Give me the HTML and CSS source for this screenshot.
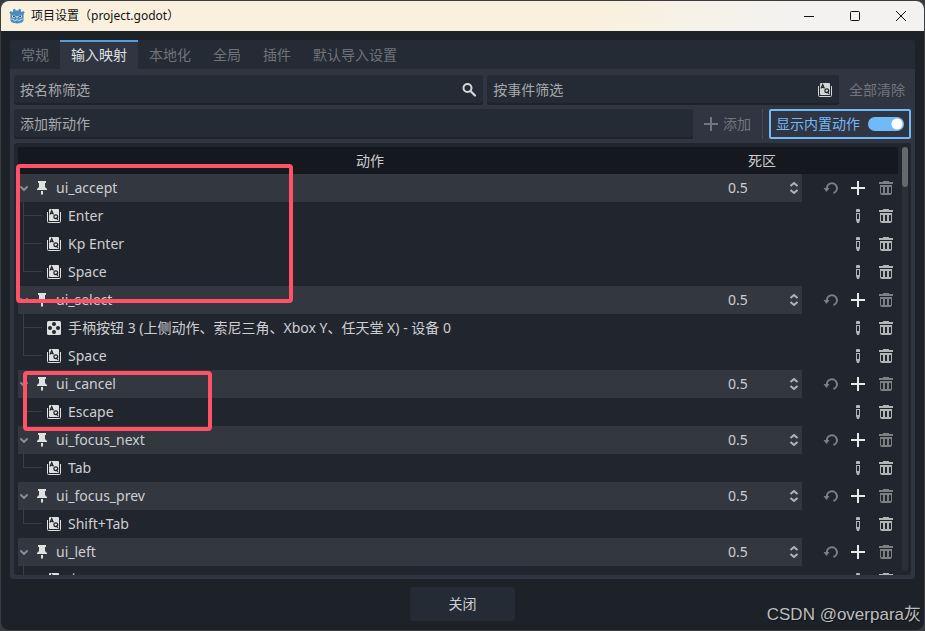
FILE: index.html
```html
<!DOCTYPE html>
<html lang="zh-CN">
<head>
    <meta charset="UTF-8">
    <meta name="viewport" content="width=device-width, initial-scale=1.0">
    <title>项目设置（project.godot）</title>
    <link rel="stylesheet" href="styles.css">
</head>
<body>
    <!-- Icon sprite -->
    <svg class="sprite" aria-hidden="true">
        <symbol id="i-arrow" viewBox="0 0 12 12"><path d="M3 5l3 3 3-3" fill="none" stroke="currentColor" stroke-width="2" stroke-linecap="round" stroke-linejoin="round"/></symbol>
        <symbol id="i-pin" viewBox="0 0 16 16"><path d="M4 1h8v2h-1v4l2 2v1H3V9l2-2V3H4z" fill="currentColor"/><path d="M7 11h2v3l-1 1-1-1z" fill="currentColor"/></symbol>
        <symbol id="i-key" viewBox="0 0 16 16">
            <path d="M1.500 4v9.500a1 1 0 0 0 1 1h11a1 1 0 0 0 1-1V4" fill="none" stroke="currentColor"/>
            <rect x="3" y="1" width="10" height="12" rx="1" fill="currentColor"/>
            <path d="M4 6.500l1.700-4 1.700 4M4.700 5.300h2" fill="none" stroke="#21252e" stroke-width="1.200"/>
            <circle cx="9.800" cy="8.700" r="1.900" fill="none" stroke="#21252e" stroke-width="1.200"/>
            <path d="M10 9.500l2 2.500" stroke="#21252e" stroke-width="1.200"/>
        </symbol>
        <symbol id="i-joy" viewBox="0 0 16 16">
            <rect x="1" y="1" width="14" height="14" rx="1.500" fill="currentColor"/>
            <g fill="#21252e"><circle cx="8" cy="4" r="2"/><circle cx="4" cy="8" r="2"/><circle cx="12" cy="8" r="2"/><circle cx="8" cy="12" r="2"/></g>
        </symbol>
        <symbol id="i-spin" viewBox="0 0 16 16"><path d="M4.500 6L8 3l3.500 3M4.500 10L8 13l3.500-3" fill="none" stroke="currentColor" stroke-width="2"/></symbol>
        <symbol id="i-reset" viewBox="0 0 16 16"><path d="M5 9a5 5 0 1 1 6.500 4" fill="none" stroke="currentColor" stroke-width="2"/><path d="M1.500 8h6l-3 4z" fill="currentColor"/></symbol>
        <symbol id="i-plus" viewBox="0 0 16 16"><path d="M7 1h2v6h6v2H9v6H7V9H1V7h6z" fill="currentColor"/></symbol>
        <symbol id="i-edit" viewBox="0 0 16 16"><path d="M6 4V2a1 1 0 0 1 1-1h2a1 1 0 0 1 1 1v2z" fill="currentColor"/><path fill-rule="evenodd" d="M6 5h4v7l-1 3H7l-1-3zm1 1v5h2V6z" fill="currentColor"/></symbol>
        <symbol id="i-trash" viewBox="0 0 16 16"><path fill-rule="evenodd" d="M5 1v1H1v2h14V2h-4V1zM2 5v8a2 2 0 0 0 2 2h8a2 2 0 0 0 2-2V5zm1 2h2v6H3zm4 0h2v6H7zm4 0h2v6h-2z" fill="currentColor"/></symbol>
        <symbol id="i-search" viewBox="0 0 16 16"><circle cx="6.500" cy="6" r="4" fill="none" stroke="currentColor" stroke-width="2"/><path d="M9.500 9l4.500 4.500" stroke="currentColor" stroke-width="2.200" stroke-linecap="round"/></symbol>
    </svg>

    <div class="window">
        <header class="titlebar">
            <svg class="logo" viewBox="0 0 16 16">
                <path d="M6 .8l.6 1.700h2.800L10 .8l2 .8-.1 1.800.8.6 1.700-.9 1.300 1.700-1.100 1.300V12c0 2-3 3.400-6.600 3.400S1.400 14 1.400 12V6.100L.3 4.800l1.300-1.700 1.700.9.8-.6L4 1.600z" fill="#478cbf"/>
                <circle cx="4.700" cy="8.200" r="1.500" fill="#fff"/><circle cx="11.300" cy="8.200" r="1.500" fill="#fff"/>
                <circle cx="4.900" cy="8.300" r="1" fill="#414042"/><circle cx="11.100" cy="8.300" r="1" fill="#414042"/>
                <path d="M8 8v2.200" stroke="#fff"/>
                <path d="M1.600 11l3 .3.300 1.400h2l.3-1.100h1.600l.3 1.100h2l.3-1.400 3-.3" fill="none" stroke="#fff" stroke-width=".6"/>
            </svg>
            <span class="title">项目设置（project.godot）</span>
            <div class="window-buttons">
                <button type="button" aria-label="最小化"><svg viewBox="0 0 12 12"><path d="M1 6.500h10" stroke="#111"/></svg></button>
                <button type="button" aria-label="最大化"><svg viewBox="0 0 12 12"><rect x="1.500" y="1.500" width="9" height="9" rx="1" fill="none" stroke="#111"/></svg></button>
                <button type="button" aria-label="关闭窗口"><svg viewBox="0 0 12 12"><path d="M1 1l10 10M11 1L1 11" stroke="#111"/></svg></button>
            </div>
        </header>

        <main class="content">
            <nav class="tabs">
                <button type="button" class="tab">常规</button>
                <button type="button" class="tab active">输入映射</button>
                <button type="button" class="tab">本地化</button>
                <button type="button" class="tab">全局</button>
                <button type="button" class="tab">插件</button>
                <button type="button" class="tab">默认导入设置</button>
            </nav>

            <section class="panel">
                <div class="toolbar">
                    <div class="field field-name">
                        <input type="text" placeholder="按名称筛选" aria-label="按名称筛选">
                        <svg class="icon"><use href="#i-search"/></svg>
                    </div>
                    <div class="field field-event">
                        <input type="text" placeholder="按事件筛选" aria-label="按事件筛选">
                        <svg class="icon"><use href="#i-key"/></svg>
                    </div>
                    <button type="button" class="flat" disabled>全部清除</button>
                </div>
                <div class="toolbar">
                    <div class="field">
                        <input type="text" placeholder="添加新动作" aria-label="添加新动作">
                    </div>
                    <button type="button" class="flat" disabled><svg class="icon"><use href="#i-plus"/></svg>添加</button>
                    <span class="separator"></span>
                    <label class="toggle">显示内置动作<input type="checkbox" checked></label>
                </div>

                <div class="tree">
                    <div class="table-wrap">
                    <table class="actions">
                        <colgroup><col><col class="col-zone"><col class="col-tools"></colgroup>
                        <thead>
                            <tr><th>动作</th><th>死区</th><th></th></tr>
                        </thead>
                        <tbody>
                            <tr class="action">
                                <td><div class="name"><svg class="arrow"><use href="#i-arrow"/></svg><svg class="icon"><use href="#i-pin"/></svg>ui_accept</div></td>
                                <td><div class="zone"><input type="text" value="0.5" aria-label="ui_accept 死区"><svg class="icon"><use href="#i-spin"/></svg></div></td>
                                <td><div class="tools"><button type="button" class="dim" aria-label="还原"><svg class="icon"><use href="#i-reset"/></svg></button><button type="button" class="bright" aria-label="添加事件"><svg class="icon"><use href="#i-plus"/></svg></button><button type="button" class="dim" aria-label="移除"><svg class="icon"><use href="#i-trash"/></svg></button></div></td>
                            </tr>
                            <tr>
                                <td colspan="2"><div class="event"><span class="branch"></span><svg class="icon"><use href="#i-key"/></svg>Enter</div></td>
                                <td><div class="tools"><button type="button" aria-label="编辑"><svg class="icon"><use href="#i-edit"/></svg></button><button type="button" aria-label="移除"><svg class="icon"><use href="#i-trash"/></svg></button></div></td>
                            </tr>
                            <tr>
                                <td colspan="2"><div class="event"><span class="branch"></span><svg class="icon"><use href="#i-key"/></svg>Kp Enter</div></td>
                                <td><div class="tools"><button type="button" aria-label="编辑"><svg class="icon"><use href="#i-edit"/></svg></button><button type="button" aria-label="移除"><svg class="icon"><use href="#i-trash"/></svg></button></div></td>
                            </tr>
                            <tr>
                                <td colspan="2"><div class="event"><span class="branch last"></span><svg class="icon"><use href="#i-key"/></svg>Space</div></td>
                                <td><div class="tools"><button type="button" aria-label="编辑"><svg class="icon"><use href="#i-edit"/></svg></button><button type="button" aria-label="移除"><svg class="icon"><use href="#i-trash"/></svg></button></div></td>
                            </tr>

                            <tr class="action">
                                <td><div class="name"><svg class="arrow"><use href="#i-arrow"/></svg><svg class="icon"><use href="#i-pin"/></svg>ui_select</div></td>
                                <td><div class="zone"><input type="text" value="0.5" aria-label="ui_select 死区"><svg class="icon"><use href="#i-spin"/></svg></div></td>
                                <td><div class="tools"><button type="button" class="dim" aria-label="还原"><svg class="icon"><use href="#i-reset"/></svg></button><button type="button" class="bright" aria-label="添加事件"><svg class="icon"><use href="#i-plus"/></svg></button><button type="button" class="dim" aria-label="移除"><svg class="icon"><use href="#i-trash"/></svg></button></div></td>
                            </tr>
                            <tr>
                                <td colspan="2"><div class="event"><span class="branch"></span><svg class="icon"><use href="#i-joy"/></svg>手柄按钮 3 (上侧动作、索尼三角、Xbox Y、任天堂 X) - 设备 0</div></td>
                                <td><div class="tools"><button type="button" aria-label="编辑"><svg class="icon"><use href="#i-edit"/></svg></button><button type="button" aria-label="移除"><svg class="icon"><use href="#i-trash"/></svg></button></div></td>
                            </tr>
                            <tr>
                                <td colspan="2"><div class="event"><span class="branch last"></span><svg class="icon"><use href="#i-key"/></svg>Space</div></td>
                                <td><div class="tools"><button type="button" aria-label="编辑"><svg class="icon"><use href="#i-edit"/></svg></button><button type="button" aria-label="移除"><svg class="icon"><use href="#i-trash"/></svg></button></div></td>
                            </tr>

                            <tr class="action">
                                <td><div class="name"><svg class="arrow"><use href="#i-arrow"/></svg><svg class="icon"><use href="#i-pin"/></svg>ui_cancel</div></td>
                                <td><div class="zone"><input type="text" value="0.5" aria-label="ui_cancel 死区"><svg class="icon"><use href="#i-spin"/></svg></div></td>
                                <td><div class="tools"><button type="button" class="dim" aria-label="还原"><svg class="icon"><use href="#i-reset"/></svg></button><button type="button" class="bright" aria-label="添加事件"><svg class="icon"><use href="#i-plus"/></svg></button><button type="button" class="dim" aria-label="移除"><svg class="icon"><use href="#i-trash"/></svg></button></div></td>
                            </tr>
                            <tr>
                                <td colspan="2"><div class="event"><span class="branch last"></span><svg class="icon"><use href="#i-key"/></svg>Escape</div></td>
                                <td><div class="tools"><button type="button" aria-label="编辑"><svg class="icon"><use href="#i-edit"/></svg></button><button type="button" aria-label="移除"><svg class="icon"><use href="#i-trash"/></svg></button></div></td>
                            </tr>

                            <tr class="action">
                                <td><div class="name"><svg class="arrow"><use href="#i-arrow"/></svg><svg class="icon"><use href="#i-pin"/></svg>ui_focus_next</div></td>
                                <td><div class="zone"><input type="text" value="0.5" aria-label="ui_focus_next 死区"><svg class="icon"><use href="#i-spin"/></svg></div></td>
                                <td><div class="tools"><button type="button" class="dim" aria-label="还原"><svg class="icon"><use href="#i-reset"/></svg></button><button type="button" class="bright" aria-label="添加事件"><svg class="icon"><use href="#i-plus"/></svg></button><button type="button" class="dim" aria-label="移除"><svg class="icon"><use href="#i-trash"/></svg></button></div></td>
                            </tr>
                            <tr>
                                <td colspan="2"><div class="event"><span class="branch last"></span><svg class="icon"><use href="#i-key"/></svg>Tab</div></td>
                                <td><div class="tools"><button type="button" aria-label="编辑"><svg class="icon"><use href="#i-edit"/></svg></button><button type="button" aria-label="移除"><svg class="icon"><use href="#i-trash"/></svg></button></div></td>
                            </tr>

                            <tr class="action">
                                <td><div class="name"><svg class="arrow"><use href="#i-arrow"/></svg><svg class="icon"><use href="#i-pin"/></svg>ui_focus_prev</div></td>
                                <td><div class="zone"><input type="text" value="0.5" aria-label="ui_focus_prev 死区"><svg class="icon"><use href="#i-spin"/></svg></div></td>
                                <td><div class="tools"><button type="button" class="dim" aria-label="还原"><svg class="icon"><use href="#i-reset"/></svg></button><button type="button" class="bright" aria-label="添加事件"><svg class="icon"><use href="#i-plus"/></svg></button><button type="button" class="dim" aria-label="移除"><svg class="icon"><use href="#i-trash"/></svg></button></div></td>
                            </tr>
                            <tr>
                                <td colspan="2"><div class="event"><span class="branch last"></span><svg class="icon"><use href="#i-key"/></svg>Shift+Tab</div></td>
                                <td><div class="tools"><button type="button" aria-label="编辑"><svg class="icon"><use href="#i-edit"/></svg></button><button type="button" aria-label="移除"><svg class="icon"><use href="#i-trash"/></svg></button></div></td>
                            </tr>

                            <tr class="action">
                                <td><div class="name"><svg class="arrow"><use href="#i-arrow"/></svg><svg class="icon"><use href="#i-pin"/></svg>ui_left</div></td>
                                <td><div class="zone"><input type="text" value="0.5" aria-label="ui_left 死区"><svg class="icon"><use href="#i-spin"/></svg></div></td>
                                <td><div class="tools"><button type="button" class="dim" aria-label="还原"><svg class="icon"><use href="#i-reset"/></svg></button><button type="button" class="bright" aria-label="添加事件"><svg class="icon"><use href="#i-plus"/></svg></button><button type="button" class="dim" aria-label="移除"><svg class="icon"><use href="#i-trash"/></svg></button></div></td>
                            </tr>
                            <tr>
                                <td colspan="2"><div class="event"><span class="branch"></span><svg class="icon"><use href="#i-key"/></svg>左</div></td>
                                <td><div class="tools"><button type="button" aria-label="编辑"><svg class="icon"><use href="#i-edit"/></svg></button><button type="button" aria-label="移除"><svg class="icon"><use href="#i-trash"/></svg></button></div></td>
                            </tr>
                        </tbody>
                    </table>
                    </div>
                    <div class="scrollbar"><div class="thumb"></div></div>
                </div>
            </section>
        </main>

        <footer class="footer">
            <button type="button" class="btn-close">关闭</button>
        </footer>
    </div>

    <!-- Annotations on top of the window -->
    <div class="mark mark-accept"></div>
    <div class="mark mark-cancel"></div>
    <div class="watermark">CSDN @overpara灰</div>
</body>
</html>
```
FILE: styles.css
```css
* {
    box-sizing: border-box;
}
body {
    margin: 0;
    height: 100vh;
    padding: 1px;
    overflow: hidden;
    background: #3a3c40;
    color: #cdcfd2;
    font: 14px/20px "Noto Sans", "Noto Sans CJK SC", sans-serif;
}
button, input {
    font: inherit;
    color: inherit;
    border: none;
    background: none;
    padding: 0;
    margin: 0;
}
.sprite {
    display: none;
}
.icon {
    width: 16px;
    height: 16px;
    flex: none;
    display: block;
}
.window {
    height: 100%;
    display: flex;
    flex-direction: column;
    background: #1d2229;
    border-radius: 8px;
    overflow: hidden;
}

/* Title bar */
.titlebar {
    display: flex;
    align-items: center;
    height: 30px;
    flex: none;
    padding-left: 8px;
    background: linear-gradient(90deg, #f9f1de 65%, #f3f2f0 85%);
    color: #111;
    font-size: 12px;
}
.logo {
    width: 16px;
    height: 16px;
    margin-right: 6px;
}
.window-buttons {
    display: flex;
    margin-left: auto;
}
.window-buttons button {
    width: 46px;
    height: 30px;
    display: flex;
    align-items: center;
    justify-content: center;
}
.window-buttons svg {
    width: 12px;
    height: 12px;
}

/* Tabs */
.content {
    flex: 1;
    min-height: 0;
    display: flex;
    flex-direction: column;
    padding: 9px 9px 0;
}
.tabs {
    display: flex;
    flex: none;
    background: #252b34;
    border-radius: 3px 3px 0 0;
}
.tab {
    height: 29px;
    padding: 0 11px 2px;
    border-top: 2px solid transparent;
    color: #70747a;
}
.tab.active {
    background: #303541;
    border-top-color: #569eda;
    color: #dfe0e2;
}
.panel {
    flex: 1;
    min-height: 0;
    display: flex;
    flex-direction: column;
    gap: 4px;
    padding: 6px 4px 4px;
    background: #303541;
    border-radius: 0 0 3px 3px;
}

/* Filter and add rows */
.toolbar {
    display: flex;
    gap: 4px;
    height: 30px;
    flex: none;
}
.field {
    flex: 1;
    min-width: 0;
    display: flex;
    align-items: center;
    background: #252b34;
    box-shadow: inset 0 -2px #1e2229;
    border-radius: 3px;
}
.field-name {
    flex: 4;
}
.field-event {
    flex: 3;
}
.field input {
    flex: 1;
    min-width: 0;
    padding-left: 6px;
    outline: none;
}
.field input::placeholder {
    color: #a6a9ad;
    opacity: 1;
}
.field .icon {
    margin-right: 6px;
    color: #d5d6d7;
}
.flat {
    display: flex;
    align-items: center;
    gap: 4px;
    padding: 0 6px;
    color: #72757d;
}
.separator {
    width: 1px;
    margin: 0 2px 0 1px;
    background: #464b55;
}
.toggle {
    display: flex;
    align-items: center;
    gap: 8px;
    padding: 0 5px;
    border: 2px solid #70bafa;
    border-radius: 2px;
    color: #70bafa;
}
.toggle input {
    appearance: none;
    width: 36px;
    height: 14px;
    border-radius: 7px;
    background: radial-gradient(circle at 29px 7px, #fff 5px, #70bafa 6px);
}

/* Action tree */
.tree {
    flex: 1;
    min-height: 0;
    display: flex;
    align-items: flex-start;
    gap: 4px;
    padding: 4px 3px 0 4px;
    background: #21252e;
    border-radius: 3px;
    overflow: hidden;
}
.table-wrap {
    flex: 1;
    min-width: 0;
}
.actions {
    width: 100%;
    table-layout: fixed;
    border-collapse: collapse;
}
.col-zone {
    width: 80px;
}
.col-tools {
    width: 96px;
}
.actions th {
    height: 27px;
    padding: 0;
    background: #15181f;
    font-weight: normal;
}
.actions td {
    height: 28px;
    padding: 0;
}
.action td:nth-child(-n+2) {
    background: #333740;
}
.name, .event {
    display: flex;
    align-items: center;
    height: 28px;
    white-space: nowrap;
}
.name .icon {
    margin: 0 6px 0 4px;
    color: #e0e0e0;
}
.event .icon {
    margin: 0 6px 0 4px;
    color: #e0e0e0;
}
.arrow {
    width: 12px;
    height: 12px;
    color: #888b90;
}
.branch {
    width: 19px;
    height: 28px;
    margin-left: 5px;
    background:
        linear-gradient(#3a3f47, #3a3f47) 0 13px / 100% 1px no-repeat,
        linear-gradient(#3a3f47, #3a3f47) 0 0 / 1px 100% no-repeat;
}
.branch.last {
    background-size: 100% 1px, 1px 14px;
}
.zone {
    display: flex;
    align-items: center;
    height: 28px;
    padding-left: 6px;
}
.zone input {
    flex: 1;
    min-width: 0;
}
.zone .icon {
    color: #b3b5b8;
}
.tools {
    display: flex;
    justify-content: flex-end;
    gap: 12px;
    padding-right: 4px;
    color: #b3b5b7;
}
.tools .dim {
    color: #7d7f83;
}
.tools .bright {
    color: #e8e8e8;
}
.scrollbar {
    align-self: stretch;
    width: 6px;
    margin-bottom: 4px;
    border-radius: 3px;
    background: #2b2f38;
}
.thumb {
    height: 40px;
    border-radius: 3px;
    background: #65686d;
}

/* Footer */
.footer {
    display: flex;
    justify-content: center;
    flex: none;
    padding: 8px 0 9px;
}
.btn-close {
    height: 34px;
    min-width: 105px;
    border-radius: 3px;
    background: #252b34;
}

/* Annotations */
.mark {
    position: absolute;
    border: 4px solid #ff5265;
    border-radius: 4px;
}
.mark-accept {
    left: 16px;
    top: 164px;
    width: 277px;
    height: 139px;
}
.mark-cancel {
    left: 23px;
    top: 371px;
    width: 189px;
    height: 60px;
}
.watermark {
    position: absolute;
    right: 4px;
    bottom: 6px;
    font: 17px/20px "Liberation Sans", "Noto Sans CJK SC", sans-serif;
    color: #bcbebf;
    text-shadow: 1px 1px 1px #0008;
}
```
